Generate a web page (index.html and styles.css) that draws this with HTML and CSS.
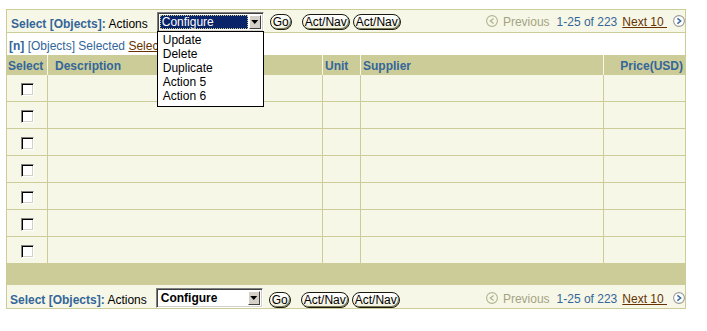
FILE: index.html
```html
<!DOCTYPE html>
<html>
<head>
<meta charset="utf-8">
<title>Select Objects</title>
<link rel="stylesheet" href="styles.css">
</head>
<body>
<div class="page">
  <div class="bar bar-top">
    <span class="txt"><b class="lbl">Select [Objects]:</b> Actions</span>
    <div class="sel sel-open">
      <span class="sel-val">Configure</span>
      <span class="sel-arrow"></span>
      <ul class="sel-list">
        <li>Update</li>
        <li>Delete</li>
        <li>Duplicate</li>
        <li>Action 5</li>
        <li>Action 6</li>
      </ul>
    </div>
    <button class="btn btn-go">Go</button>
    <button class="btn btn-act">Act/Nav</button>
    <button class="btn btn-act2">Act/Nav</button>
    <div class="pager">
      <svg class="pg-icon" width="12" height="12" viewBox="0 0 12 12"><circle cx="6" cy="6" r="5.4" fill="#f7f7e7" stroke="#b3b392" stroke-width="1.1"/><path d="M7.6 3.4 L4.3 6 L7.6 8.6" fill="none" stroke="#b3b392" stroke-width="1.3"/></svg>
      <span class="pg-prev">Previous</span>
      <span class="pg-count">1-25 of 223</span>
      <a class="pg-next" href="#">Next 10&nbsp;</a>
      <svg class="pg-icon" width="12" height="12" viewBox="0 0 12 12"><circle cx="6" cy="6" r="5.4" fill="#ffffff" stroke="#9a9a9a" stroke-width="1.1"/><path d="M4.4 3.4 L7.7 6 L4.4 8.6" fill="none" stroke="#336699" stroke-width="1.4"/></svg>
    </div>
  </div>
  <div class="selrow"><b>[n]</b> [Objects] Selected <a class="link" href="#">Select All</a> | <a class="link" href="#">Select None</a></div>
  <table class="grid">
    <thead>
      <tr><th class="c-sel">Select</th><th class="c-desc">Description</th><th class="c-unit">Unit</th><th class="c-sup">Supplier</th><th class="c-price">Price(USD)</th></tr>
    </thead>
    <tbody>
      <tr><td class="c-sel"><input type="checkbox" class="chk"></td><td></td><td></td><td></td><td></td></tr>
      <tr><td class="c-sel"><input type="checkbox" class="chk"></td><td></td><td></td><td></td><td></td></tr>
      <tr><td class="c-sel"><input type="checkbox" class="chk"></td><td></td><td></td><td></td><td></td></tr>
      <tr><td class="c-sel"><input type="checkbox" class="chk"></td><td></td><td></td><td></td><td></td></tr>
      <tr><td class="c-sel"><input type="checkbox" class="chk"></td><td></td><td></td><td></td><td></td></tr>
      <tr><td class="c-sel"><input type="checkbox" class="chk"></td><td></td><td></td><td></td><td></td></tr>
      <tr><td class="c-sel"><input type="checkbox" class="chk"></td><td></td><td></td><td></td><td></td></tr>
    </tbody>
  </table>
  <div class="band"></div>
  <div class="bar bar-bottom">
    <span class="txt"><b class="lbl">Select [Objects]:</b> Actions</span>
    <div class="sel">
      <span class="sel-val sel-val-plain">Configure</span>
      <span class="sel-arrow"></span>
    </div>
    <button class="btn btn-go">Go</button>
    <button class="btn btn-act">Act/Nav</button>
    <button class="btn btn-act2">Act/Nav</button>
    <div class="pager">
      <svg class="pg-icon" width="12" height="12" viewBox="0 0 12 12"><circle cx="6" cy="6" r="5.4" fill="#f7f7e7" stroke="#b3b392" stroke-width="1.1"/><path d="M7.6 3.4 L4.3 6 L7.6 8.6" fill="none" stroke="#b3b392" stroke-width="1.3"/></svg>
      <span class="pg-prev">Previous</span>
      <span class="pg-count">1-25 of 223</span>
      <a class="pg-next" href="#">Next 10&nbsp;</a>
      <svg class="pg-icon" width="12" height="12" viewBox="0 0 12 12"><circle cx="6" cy="6" r="5.4" fill="#ffffff" stroke="#9a9a9a" stroke-width="1.1"/><path d="M4.4 3.4 L7.7 6 L4.4 8.6" fill="none" stroke="#336699" stroke-width="1.4"/></svg>
    </div>
  </div>
</div>
</body>
</html>
```
FILE: styles.css
```css
body {
  margin: 0;
  background: #ffffff;
  font-family: "Liberation Sans", Arial, sans-serif;
  font-size: 12px;
  color: #000;
}

.page {
  margin: 9px 0 0 6px;
  width: 680px;
}

.bar {
  box-sizing: border-box;
  display: flex;
  align-items: flex-end;
  background: #f7f7e7;
  border: 1px solid #cccc99;
  padding-left: 4px;
}

.bar-top {
  height: 24px;
}

.bar-bottom {
  height: 24px;
  border-top: none;
  padding-left: 3px;
}

.txt {
  line-height: 14px;
  margin-bottom: 1px;
  white-space: nowrap;
}

.lbl {
  color: #336699;
}

/* select */
.sel {
  position: relative;
  box-sizing: border-box;
  width: 107px;
  height: 20px;
  margin-left: 9px;
  display: flex;
  padding: 2px;
  background: #fff;
  border: 1px solid;
  border-color: #808080 #ffffff #ffffff #808080;
  box-shadow: inset 1px 1px 0 #404040, inset -1px -1px 0 #d4d0c8;
}

.sel-val {
  flex: 1;
  margin-right: 1px;
  padding-left: 2px;
  line-height: 14px;
  background: #0a246a;
  color: #fff;
  outline: 1px dotted #c9c98f;
  outline-offset: -1px;
}

.sel-val-plain {
  background: #fff;
  color: #000;
  font-weight: bold;
  outline: none;
}

.sel-arrow {
  box-sizing: border-box;
  width: 12px;
  display: flex;
  align-items: center;
  justify-content: center;
  background: #d4d0c8;
  border: 1px solid;
  border-color: #ffffff #404040 #404040 #ffffff;
}

.sel-arrow::after {
  content: "";
  width: 7px;
  height: 4px;
  background: #000;
  clip-path: polygon(0 0, 100% 0, 50% 100%);
}

.sel-list {
  position: absolute;
  z-index: 10;
  top: 100%;
  left: -1px;
  box-sizing: border-box;
  width: 107px;
  margin: 0;
  padding: 1px 0 3px;
  list-style: none;
  background: #fff;
  border: 1px solid #000;
}

.sel-list li {
  padding-left: 5px;
  line-height: 14px;
}

/* buttons */
.btn {
  box-sizing: border-box;
  height: 16px;
  margin: 0 0 2px 6px;
  padding: 0 2px;
  font-family: "Liberation Sans", Arial, sans-serif;
  font-size: 12px;
  line-height: 14px;
  color: #000;
  border: 1px solid #1a1a10;
  border-radius: 8px;
  background: linear-gradient(#ffffff, #f1f1de);
  box-shadow: inset -1px -1px 0 #7a7a55;
}

.btn-act {
  margin-left: 10px;
}

.btn-act2 {
  margin-left: 3px;
}

.bar-bottom .btn {
  margin-bottom: 0;
}

/* pager */
.pager {
  margin-left: auto;
  display: flex;
  align-items: flex-end;
}

.pg-icon {
  display: block;
  margin-bottom: 5px;
}

.pg-prev,
.pg-count,
.pg-next {
  line-height: 14px;
  margin-bottom: 3px;
  white-space: nowrap;
}

.bar-bottom .pg-prev,
.bar-bottom .pg-count,
.bar-bottom .pg-next {
  margin-bottom: 2px;
}

.bar-bottom .pg-icon {
  margin-bottom: 4px;
}

.pg-prev {
  margin-left: 5px;
  color: #a3a383;
}

.pg-count {
  margin-left: 7px;
  color: #336699;
}

.pg-next {
  margin-left: 5px;
  margin-right: 6px;
  color: #663300;
  text-decoration: underline;
}

/* selected row */
.selrow {
  box-sizing: border-box;
  height: 22px;
  padding: 6px 0 0 2px;
  line-height: 14px;
  color: #336699;
  border-left: 1px solid #cccc99;
  border-right: 1px solid #cccc99;
  background: #fff;
  white-space: nowrap;
  overflow: hidden;
}

.link {
  color: #663300;
  text-decoration: underline;
}

/* table */
.grid {
  width: 680px;
  table-layout: fixed;
  border-collapse: separate;
  border-spacing: 0;
  border-left: 1px solid #cccc99;
}

.grid thead tr {
  height: 20px;
}

.grid tbody tr {
  height: 27px;
}

.grid th,
.grid td {
  box-sizing: border-box;
  vertical-align: top;
}

.grid th {
  padding: 4px 0 0;
  line-height: 14px;
  font-weight: bold;
  text-align: left;
  color: #336699;
  background: #cccc99;
  border-right: 1px solid #f7f7e7;
  white-space: nowrap;
}

.grid td {
  padding: 0;
  background: #f7f7e7;
  border-right: 1px solid #cccc99;
  border-bottom: 1px solid #cccc99;
}

.c-sel { width: 41px; }
.c-desc { width: 275px; }
.c-unit { width: 38px; }
.c-sup { width: 243px; }
.c-price { width: 82px; }

.grid th.c-sel { padding-left: 1px; }
.grid th.c-desc { padding-left: 7px; }
.grid th.c-unit,
.grid th.c-sup { padding-left: 2px; }
.grid th.c-price {
  text-align: right;
  padding-right: 2px;
  border-right-color: #cccc99;
}

.grid td.c-sel {
  padding-top: 8px;
}

.chk {
  appearance: none;
  -webkit-appearance: none;
  display: block;
  box-sizing: border-box;
  width: 13px;
  height: 13px;
  margin: 0 auto;
  background: #fff;
  border: 1px solid;
  border-color: #808080 #ffffff #ffffff #808080;
  box-shadow: inset 1px 1px 0 #000, inset -1px -1px 0 #d4d0c8;
}

.band {
  height: 21px;
  background: #cccc99;
}
```
